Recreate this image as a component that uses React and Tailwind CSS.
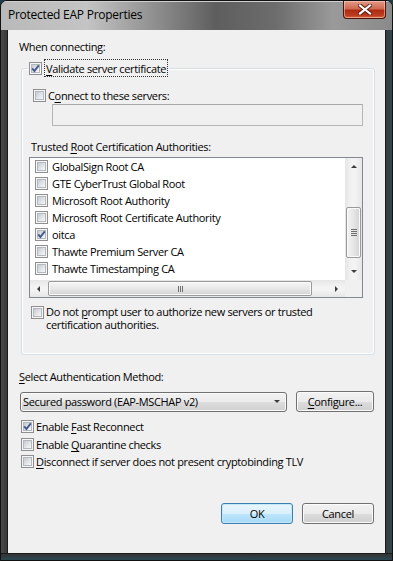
import React from "react";

function Check({ checked, className = "" }) {
  return (
    <div className={"relative w-[13px] h-[13px] shrink-0 border border-[#8f8f8f] bg-[#f6f6f6] p-[1px] " + className}>
      <div className="w-full h-full border border-[#b3b8be] bg-[linear-gradient(135deg,#c6cbd1_0%,#dfe2e6_50%,#f8f8f8_100%)]" />
      {checked && (
        <svg className="absolute left-0 top-0" width="11" height="11" viewBox="0 0 11 11">
          <path d="M2.2 5.4 L4.4 8 L8.8 2.4" fill="none" stroke="#44578f" strokeWidth="1.9" />
        </svg>
      )}
    </div>
  );
}

function U({ children }) {
  return <span className="underline underline-offset-[2px] decoration-[1px]">{children}</span>;
}

function Arrow({ dir }) {
  const paths = {
    up: "M0 3 L3 0 L6 3 Z",
    down: "M0 0 L6 0 L3 3 Z",
    left: "M3 0 L3 6 L0 3 Z",
    right: "M0 0 L3 3 L0 6 Z",
  };
  const w = dir === "up" || dir === "down" ? 6 : 3;
  const h = dir === "up" || dir === "down" ? 3 : 6;
  return (
    <svg width={w} height={h} viewBox={`0 0 ${w} ${h}`}>
      <path d={paths[dir]} fill="#3c3c3c" />
    </svg>
  );
}

const items = [
  ["GlobalSign Root CA", false],
  ["GTE CyberTrust Global Root", false],
  ["Microsoft Root Authority", false],
  ["Microsoft Root Certificate Authority", false],
  ["oitca", true],
  ["Thawte Premium Server CA", false],
  ["Thawte Timestamping CA", false],
];

export default function App() {
  return (
    <div className="w-[393px] h-[561px] bg-[#1e3d48] font-['Open_Sans',sans-serif] text-[11px] leading-[15px] tracking-[-0.35px] text-black overflow-hidden">
      <div className="w-full h-full rounded-t-[7px] border border-[#111] flex flex-col overflow-hidden bg-[linear-gradient(to_bottom,#8c8c8c_0px,#6a6a6a_30px,#3c3c3c_90px,#2f2f2f_100%)]">
        {/* Title bar */}
        <div className="relative h-[29px] shrink-0 pl-[7px] pt-[6px] bg-[linear-gradient(to_right,#b9b9b9_0%,#c4c4c4_22%,#8d8d8d_40%,#5e5e5e_55%,#6c6c6c_70%,#9a9a9a_85%,#8a8a8a_100%)] shadow-[inset_0_1px_0_#cfcfcf]">
          <span className="text-[12px] leading-[15px] tracking-[-0.25px] text-black">Protected EAP Properties</span>
          <div className="absolute right-[6px] top-0 w-[43px] h-[18px] rounded-b-[4px] border border-t-0 border-[#4a1408] bg-[linear-gradient(to_bottom,#e29a88_0%,#cf6a52_45%,#b02a12_55%,#bd3c20_85%,#d86a44_100%)] shadow-[inset_0_0_0_1px_rgba(255,220,210,0.5)] flex items-center justify-center">
            <svg width="14" height="11" viewBox="0 0 14 11">
              <path d="M2 1.5 L12 9.5 M12 1.5 L2 9.5" stroke="#5a1a0c" strokeWidth="4" strokeLinecap="square" />
              <path d="M2 1.5 L12 9.5 M12 1.5 L2 9.5" stroke="#ffffff" strokeWidth="2.2" strokeLinecap="square" />
            </svg>
          </div>
        </div>

        <div className="flex h-[523px] shrink-0">
          <div className="w-[7px] shrink-0 border-r border-[#1b1b1b] bg-[linear-gradient(to_right,#4a4a4a,#3a3a3a)]" />
          {/* Client */}
          <div className="w-[377px] shrink-0 bg-[#f0f0f0] flex flex-col">
            <div className="mt-[9px] ml-[11px]">When connecting:</div>

            {/* Group box */}
            <div className="relative mt-[14px] ml-[13px] w-[354px] h-[287px] shrink-0 rounded-[3px] border border-[#d5dfe5] shadow-[inset_0_0_0_1px_#ffffff] flex flex-col">
              <div className="absolute left-[6px] top-[-10px] bg-[#f0f0f0] pl-[1px] pr-[1px] flex items-center">
                <Check checked />
                <div className="ml-[2px] border border-dotted border-[#333] px-[1px] h-[18px] flex items-center">
                  <span><U>V</U>alidate server certificate</span>
                </div>
              </div>

              <div className="mt-[19px] ml-[11px] flex items-center gap-[2px]">
                <Check />
                <span>C<U>o</U>nnect to these servers:</span>
              </div>

              <div className="mt-[1px] ml-[30px] w-[311px] h-[22px] border border-[#b5b5b5] border-t-[#a8a8a8] bg-[#f0f0f0]" />

              <div className="mt-[13px] ml-[9px]">Trusted <U>R</U>oot Certification Authorities:</div>

              <div className="mt-[3px] ml-[7px] w-[334px] h-[141px] border border-[#828790] bg-white grid grid-cols-[1fr_17px] grid-rows-[1fr_17px]">
                <div className="overflow-hidden pl-[5px]">
                  {items.map(([name, c], i) => (
                    <div key={i} className="h-[17px] flex items-center gap-[4px] whitespace-nowrap">
                      <Check checked={c} />
                      <span>{name}</span>
                    </div>
                  ))}
                </div>
                {/* vertical scrollbar */}
                <div className="flex flex-col bg-[linear-gradient(to_right,#e6e6e6,#f3f3f3_40%,#f3f3f3_60%,#e6e6e6)]">
                  <div className="h-[17px] flex items-center justify-center"><Arrow dir="up" /></div>
                  <div className="flex-1 px-[1px]">
                    <div className="mt-[32px] h-[51px] rounded-[2px] border border-[#9a9a9a] bg-[linear-gradient(to_right,#f4f4f4,#e6e6e6_50%,#d4d4d4)] shadow-[inset_0_0_0_1px_#fafafa] flex flex-col items-center justify-center gap-[1px]">
                      <div className="w-[6px] h-[1px] bg-[#6f6f6f]" />
                      <div className="w-[6px] h-[1px] bg-[#6f6f6f]" />
                      <div className="w-[6px] h-[1px] bg-[#6f6f6f]" />
                      <div className="w-[6px] h-[1px] bg-[#6f6f6f]" />
                    </div>
                  </div>
                  <div className="h-[17px] flex items-center justify-center"><Arrow dir="down" /></div>
                </div>
                {/* horizontal scrollbar */}
                <div className="flex items-stretch bg-[linear-gradient(to_bottom,#e6e6e6,#f3f3f3_40%,#f3f3f3_60%,#e6e6e6)]">
                  <div className="w-[17px] flex items-center justify-center"><Arrow dir="left" /></div>
                  <div className="flex-1 py-[1px]">
                    <div className="ml-[1px] w-[264px] h-full rounded-[2px] border border-[#9a9a9a] bg-[linear-gradient(to_bottom,#f6f6f6,#e8e8e8_50%,#d2d2d2)] shadow-[inset_0_0_0_1px_#fafafa] flex items-center justify-center gap-[1px]">
                      <div className="w-[1px] h-[6px] bg-[#6f6f6f]" />
                      <div className="w-[1px] h-[6px] bg-[#6f6f6f]" />
                      <div className="w-[1px] h-[6px] bg-[#6f6f6f]" />
                    </div>
                  </div>
                  <div className="w-[17px] flex items-center justify-center"><Arrow dir="right" /></div>
                </div>
                <div className="bg-[#f0f0f0]" />
              </div>

              <div className="mt-[7px] ml-[9px] flex items-start gap-[2px]">
                <Check className="mt-[1px]" />
                <div className="leading-[13px]">
                  <div>Do not <U>p</U>rompt user to authorize new servers or trusted</div>
                  <div>certification authorities.</div>
                </div>
              </div>
            </div>

            <div className="mt-[14px] ml-[11px]"><U>S</U>elect Authentication Method:</div>

            <div className="mt-[7px] ml-[12px] flex items-center h-[21px]">
              <div className="w-[267px] h-[20px] rounded-[3px] border border-[#707070] bg-[linear-gradient(to_bottom,#f2f2f2_0%,#ebebeb_50%,#dddddd_51%,#cfcfcf_100%)] shadow-[inset_0_0_0_1px_#fbfbfb] flex items-center pl-[2px] pr-[6px]">
                <span className="flex-1">Secured password (EAP-MSCHAP v2)</span>
                <Arrow dir="down" />
              </div>
              <div className="ml-[9px] w-[78px] h-[21px] rounded-[3px] border border-[#707070] bg-[linear-gradient(to_bottom,#f2f2f2_0%,#ebebeb_50%,#dddddd_51%,#cfcfcf_100%)] shadow-[inset_0_0_0_1px_#fbfbfb] flex items-center justify-center">
                <span><U>C</U>onfigure...</span>
              </div>
            </div>

            <div className="mt-[6px] ml-[13px] flex flex-col">
              <div className="h-[17.5px] flex items-center gap-[2px]">
                <Check checked />
                <span>Enable <U>F</U>ast Reconnect</span>
              </div>
              <div className="h-[17.5px] flex items-center gap-[2px]">
                <Check />
                <span>Enable <U>Q</U>uarantine checks</span>
              </div>
              <div className="h-[17.5px] flex items-center gap-[2px]">
                <Check />
                <span><U>D</U>isconnect if server does not present cryptobinding TLV</span>
              </div>
            </div>

            <div className="mt-[32px] mr-[11px] flex justify-end gap-[9px]">
              <div className="w-[72px] h-[21px] rounded-[3px] border border-[#3c7fb1] bg-[linear-gradient(to_bottom,#eaf6fd_0%,#d9f0fc_50%,#bee6fd_51%,#a7d9f5_100%)] shadow-[inset_0_0_0_1px_#c5e8fb] flex items-center justify-center">
                OK
              </div>
              <div className="w-[72px] h-[21px] rounded-[3px] border border-[#707070] bg-[linear-gradient(to_bottom,#f2f2f2_0%,#ebebeb_50%,#dddddd_51%,#cfcfcf_100%)] shadow-[inset_0_0_0_1px_#fbfbfb] flex items-center justify-center">
                Cancel
              </div>
            </div>
          </div>
          <div className="flex-1 border-l border-[#1b1b1b] bg-[linear-gradient(to_right,#3a3a3a,#2d4a55)]" />
        </div>
        <div className="flex-1 border-t border-[#1b1b1b] bg-[linear-gradient(to_bottom,#333,#2a4752)]" />
      </div>
    </div>
  );
}
